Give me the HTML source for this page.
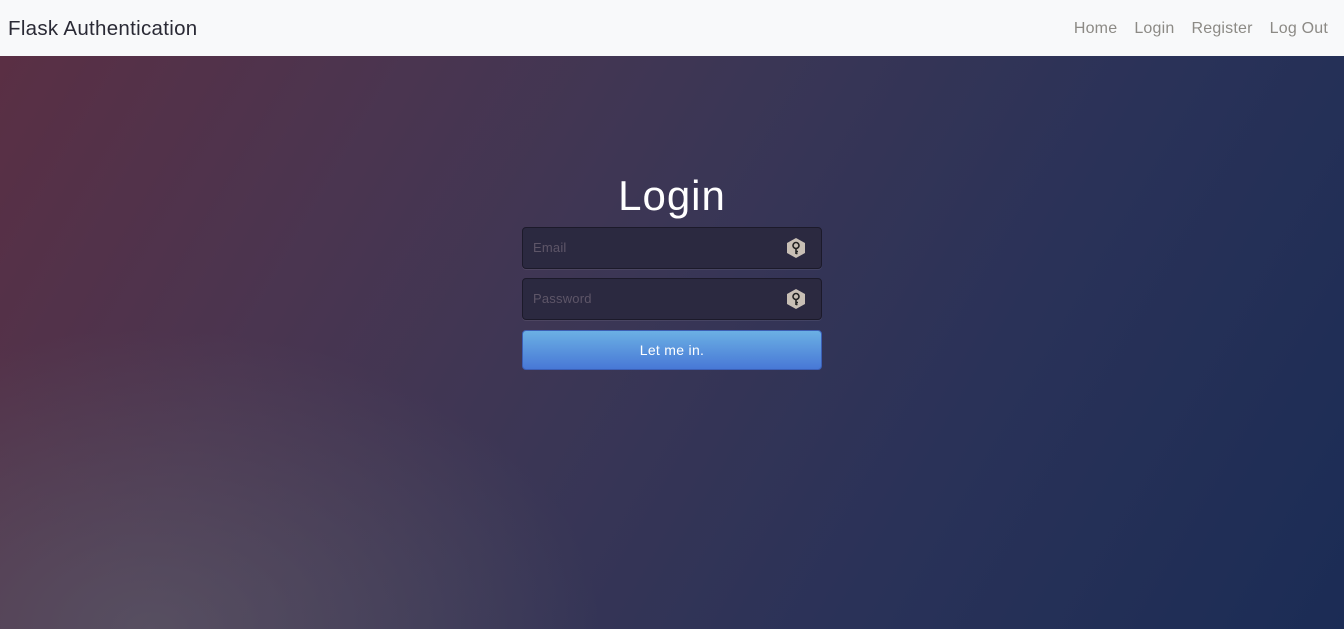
<!DOCTYPE html>
<html><head><meta charset="utf-8"><style>
html,body{margin:0;padding:0;width:1344px;height:629px;overflow:hidden;font-family:"Liberation Sans",sans-serif}
.nav{height:56px;background:#f8f9fa;position:relative}
.brand{position:absolute;left:8px;top:17px;font-size:20.5px;letter-spacing:0.3px;color:#2a2a35}
.links{position:absolute;right:16px;top:20px;font-size:16px;letter-spacing:0.2px;color:#8c8a85}
.links span{margin-left:17px}
.bg{position:absolute;top:56px;left:0;width:1344px;height:573px;
background:linear-gradient(120deg,#5a2f44 0%,#4a3550 25%,#3b3655 45%,#2a3258 70%,#1b2c55 100%);}
.bg:after{content:"";position:absolute;inset:0;background:radial-gradient(ellipse 450px 300px at 150px 573px,rgba(100,100,110,.55),rgba(0,0,0,0))}
h1{position:absolute;top:172px;left:0;width:1344px;text-align:center;margin:0;font-weight:normal;font-size:42px;letter-spacing:1px;color:#fff;z-index:2}
.inp{position:absolute;left:522px;width:298px;height:40px;background:#2b2940;border:1px solid #1c1a2a;border-radius:4px;box-shadow:0 1px 0 rgba(255,255,255,.08);z-index:2}
.inp span{position:absolute;left:10px;top:12px;font-size:13px;letter-spacing:0.2px;color:#5e5668}
.hex{position:absolute;right:14px;top:9px;width:22px;height:22px}
.btn{position:absolute;left:522px;top:330px;width:298px;height:38px;border:1px solid #3c5fb5;border-radius:4px;background:linear-gradient(#6bb0e4,#4878d6);color:#fff;text-align:center;line-height:38px;font-size:14px;letter-spacing:0.3px;z-index:2}
</style></head><body>
<div class="nav"><div class="brand">Flask Authentication</div>
<div class="links"><span>Home</span><span>Login</span><span>Register</span><span>Log Out</span></div></div>
<div class="bg"></div>
<h1>Login</h1>
<div class="inp" style="top:227px"><span>Email</span>
<svg class="hex" viewBox="0 0 22 22"><polygon points="11,1 20,6 20,16 11,21 2,16 2,6" fill="#c8bfb5"/><circle cx="11" cy="8.5" r="3" fill="none" stroke="#222" stroke-width="1.6"/><path d="M11 11.5V17M11 14.5h2M11 16.5h1.5" stroke="#222" stroke-width="1.6" fill="none"/></svg></div>
<div class="inp" style="top:278px"><span>Password</span>
<svg class="hex" viewBox="0 0 22 22"><polygon points="11,1 20,6 20,16 11,21 2,16 2,6" fill="#c8bfb5"/><circle cx="11" cy="8.5" r="3" fill="none" stroke="#222" stroke-width="1.6"/><path d="M11 11.5V17M11 14.5h2M11 16.5h1.5" stroke="#222" stroke-width="1.6" fill="none"/></svg></div>
<div class="btn">Let me in.</div>
</body></html>
